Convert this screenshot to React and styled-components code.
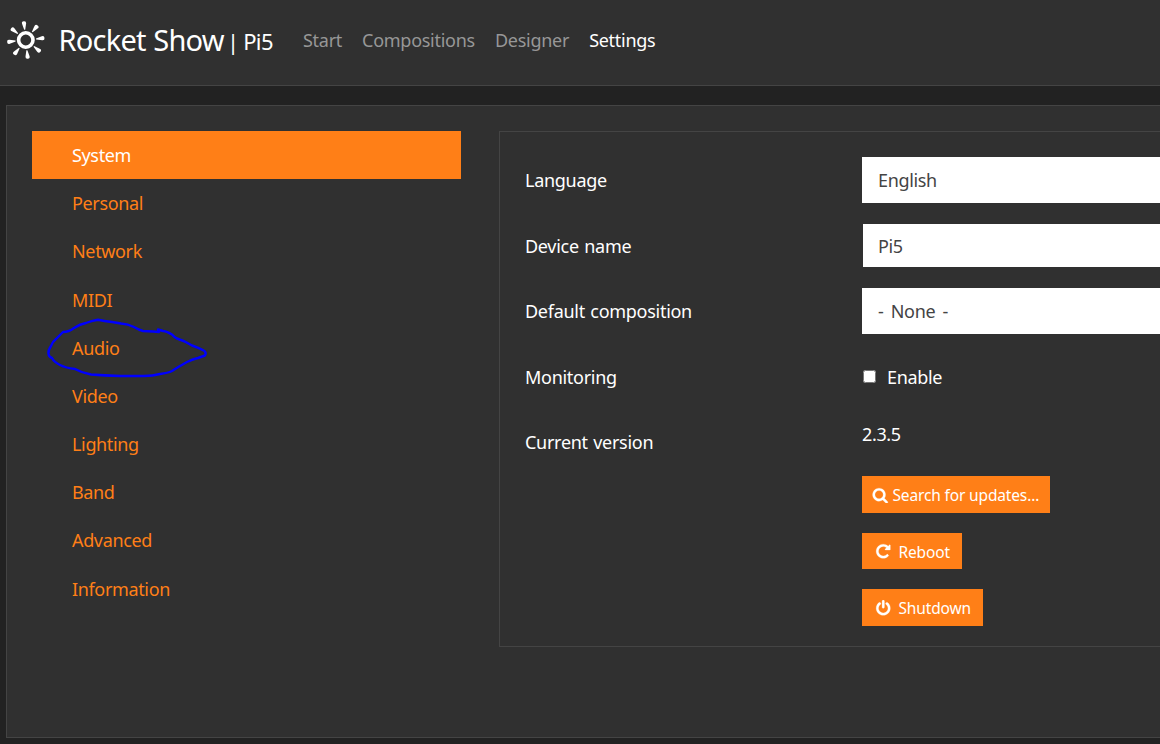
import React from 'react';
import styled, { createGlobalStyle } from 'styled-components';

const Global = createGlobalStyle`
  *, *::before, *::after { box-sizing: border-box; }
  body {
    margin: 0;
    height: 744px;
    overflow: hidden;
    background: #222;
    color: #fff;
    font-family: 'Noto Sans', 'Open Sans', sans-serif;
    font-size: 18px;
    line-height: 28px;
    letter-spacing: -0.35px;
    word-spacing: 1px;
  }
`;

const Page = styled.div`
  height: 744px;
  overflow: hidden;
  display: flex;
  flex-direction: column;
`;

const Header = styled.header`
  flex: none;
  height: 86px;
  padding: 0 0 6px 6px;
  display: flex;
  align-items: center;
  background: #303030;
  border-bottom: 1px solid #444;
`;

const Brand = styled.div`
  display: flex;
  align-items: center;
  width: 297px;
  white-space: nowrap;
`;

const LogoMark = styled.svg`
  flex: none;
  width: 40px;
  height: 40px;
`;

const BrandName = styled.span`
  margin-left: 12.6px;
  width: 168.4px;
  font-size: 29px;
  line-height: 40px;
  letter-spacing: -0.8px;
  word-spacing: 1px;
`;

const DeviceName = styled.span`
  padding-top: 3px;
  font-size: 22px;
  letter-spacing: -0.6px;
  word-spacing: -0.5px;
`;

const MainNav = styled.nav`
  display: flex;
  gap: 20px;
  letter-spacing: -0.27px;
`;

const NavLink = styled.a`
  color: ${(p) => (p.$active ? '#fff' : '#979797')};
`;

const Panel = styled.main`
  flex: none;
  margin: 19px 0 0 6px;
  width: 1300px;
  height: 633px;
  padding: 25px;
  display: flex;
  align-items: flex-start;
  gap: 38px;
  background: #303030;
  border: 1px solid #444;
`;

const SideNav = styled.nav`
  position: relative;
  flex: none;
  width: 429px;
  display: flex;
  flex-direction: column;
`;

const SideLink = styled.a`
  height: 48.18px;
  padding: 10px 40px;
  color: ${(p) => (p.$active ? '#fff' : '#ff7f17')};
  background: ${(p) => (p.$active ? '#ff7f17' : 'transparent')};
`;

const Scribble = styled.svg`
  position: absolute;
  left: 8px;
  top: 179px;
  width: 180px;
  height: 75px;
  overflow: visible;
  pointer-events: none;
`;

const Settings = styled.section`
  flex: none;
  width: 760px;
  height: 516px;
  padding: 25px;
  display: flex;
  flex-direction: column;
  gap: 19.5px;
  border: 1px solid #444;
`;

const Row = styled.div`
  flex: none;
  display: flex;
  align-items: flex-start;
  min-height: 46px;
`;

const Label = styled.label`
  flex: none;
  width: 337px;
  padding-top: 9px;
  letter-spacing: -0.28px;
`;

const Field = styled.div`
  width: 400px;
  height: ${(p) => (p.$outlined ? 45 : 46)}px;
  padding: 8px 15px;
  color: #444;
  background: #fff;
  border: 1px solid ${(p) => (p.$outlined ? '#303030' : '#fff')};
  word-spacing: 3px;
`;

const CheckLine = styled.label`
  display: flex;
  align-items: center;
  gap: 11px;
  padding-top: 9px;
`;

const Checkbox = styled.input`
  margin: 0 0 0 1px;
  width: 13px;
  height: 13px;
`;

const VersionColumn = styled.div`
  display: flex;
  flex-direction: column;
  align-items: flex-start;
  gap: 20px;
  padding-top: 1px;
`;

const Version = styled.div`
  height: 35.5px;
`;

const Button = styled.button`
  display: flex;
  align-items: center;
  gap: ${(p) => p.$gap || 7}px;
  width: ${(p) => p.$width}px;
  height: ${(p) => p.$height || 37}px;
  padding: 2px 0 0 ${(p) => p.$inset || 13}px;
  border: 0;
  color: #fff;
  background: #ff7f17;
  font: 15.5px 'Noto Sans', sans-serif;
  letter-spacing: -0.15px;
  word-spacing: 0;
  white-space: nowrap;
`;

const Glyph = styled.svg`
  flex: none;
  width: 16.5px;
  height: 16.5px;
  fill: #fff;
`;

const glyphs = {
  search:
    'M1216 832q0-185-131.5-316.5t-316.5-131.5-316.5 131.5-131.5 316.5 131.5 316.5 316.5 131.5 316.5-131.5 131.5-316.5zm512 832q0 52-38 90t-90 38q-54 0-90-38l-343-342q-179 124-399 124-143 0-273.5-55.5t-225-150-150-225-55.5-273.5 55.5-273.5 150-225 225-150 273.5-55.5 273.5 55.5 225 150 150 225 55.5 273.5q0 220-124 399l343 343q37 37 37 90z',
  repeat:
    'M1664 256v448q0 26-19 45t-45 19h-448q-42 0-59-40-17-39 14-69l138-138q-148-137-349-137-104 0-198.5 40.5t-163.5 109.5-109.5 163.5-40.5 198.5 40.5 198.5 109.5 163.5 163.5 109.5 198.5 40.5q119 0 225-52t179-147q7-10 23-12 15 0 25 9l137 138q9 8 9.5 20.5t-7.5 22.5q-109 132-264 204.5t-327 72.5q-156 0-298-61t-245-164-164-245-61-298 61-298 164-245 245-164 298-61q147 0 284.5 55.5t244.5 156.5l130-129q29-31 70-14 39 17 39 59z',
  power:
    'M1664 896q0 156-61 298t-164 245-245 164-298 61-298-61-245-164-164-245-61-298q0-182 80.5-343t226.5-270q43-32 95.5-25t83.5 50q32 42 24.5 94.5t-49.5 84.5q-98 74-151.5 181t-53.5 228q0 104 40.5 198.5t109.5 163.5 163.5 109.5 198.5 40.5 198.5-40.5 163.5-109.5 109.5-163.5 40.5-198.5q0-121-53.5-228t-151.5-181q-42-32-49.5-84.5t24.5-94.5q31-43 84-50t95 25q146 109 226.5 270t80.5 343zm-640-768v640q0 52-38 90t-90 38-90-38-38-90v-640q0-52 38-90t90-38 90 38 38 90z',
};

const Icon = ({ name }) => (
  <Glyph viewBox="0 0 1792 1792" aria-hidden="true">
    <path d={glyphs[name]} stroke="#fff" strokeWidth="25" />
  </Glyph>
);

const Logo = () => (
  <LogoMark viewBox="0 0 40 40" aria-hidden="true">
    <circle cx="19.8" cy="20" r="7.2" fill="none" stroke="#fff" strokeWidth="3.6" />
    {[-6, 39, 84, 129, 174, 219, 264, 309].map((angle) => (
      <path
        key={angle}
        transform={`rotate(${angle} 19.8 20)`}
        d="M19.3 9.700L17.800 3.700a2.050 2.050 0 1 1 4 0L20.300 9.700z"
        fill="#fff"
      />
    ))}
  </LogoMark>
);

const mainLinks = ['Start', 'Compositions', 'Designer', 'Settings'];
const sideLinks = [
  'System', 'Personal', 'Network', 'MIDI', 'Audio',
  'Video', 'Lighting', 'Band', 'Advanced', 'Information',
];

export default function App() {
  return (
    <Page>
      <Global />
      <Header>
        <Brand>
          <Logo />
          <BrandName>Rocket Show</BrandName>
          <DeviceName>| Pi5</DeviceName>
        </Brand>
        <MainNav>
          {mainLinks.map((t) => (
            <NavLink key={t} $active={t === 'Settings'}>{t}</NavLink>
          ))}
        </MainNav>
      </Header>
      <Panel>
        <SideNav>
          {sideLinks.map((t) => (
            <SideLink key={t} $active={t === 'System'}>{t}</SideLink>
          ))}
          <Scribble viewBox="40 310 180 75">
            <path
              d="M159 332L153 331.5L143 331Q139 330 134 327Q128 324 121 323.5L112 322Q104 321 98 319.8Q91 321 86 323Q80 324 74 328Q69 332 63 332Q59 336 56 339Q53 341 51 346Q48 350 48.500 354Q49 357 52 358Q54 362 60 365Q66 368 75 369Q82 373 91 374.500Q104 375.500 120 376H144Q153 376 160 374Q168 373 172 371Q178 367 187 362Q193 359 198 358L205 355.500Q206.500 353 204.500 351Q197 347 192 345.500Q185 341 177 338.500Q174 337 172 334.500Q166 331 163 331L158 329.500"
              fill="none"
              stroke="#0000fe"
              strokeWidth="2.4"
              strokeLinejoin="round"
              strokeLinecap="round"
            />
          </Scribble>
        </SideNav>
        <Settings>
          <Row>
            <Label>Language</Label>
            <Field>English</Field>
          </Row>
          <Row>
            <Label>Device name</Label>
            <Field $outlined>Pi5</Field>
          </Row>
          <Row>
            <Label>Default composition</Label>
            <Field>- None -</Field>
          </Row>
          <Row>
            <Label>Monitoring</Label>
            <CheckLine>
              <Checkbox type="checkbox" />
              Enable
            </CheckLine>
          </Row>
          <Row>
            <Label>Current version</Label>
            <VersionColumn>
              <Version>2.3.5</Version>
              <Button $width={188} $inset={10} $gap={4}><Icon name="search" />Search for updates...</Button>
              <Button $width={100} $height={36}><Icon name="repeat" />Reboot</Button>
              <Button $width={121}><Icon name="power" />Shutdown</Button>
            </VersionColumn>
          </Row>
        </Settings>
      </Panel>
    </Page>
  );
}
